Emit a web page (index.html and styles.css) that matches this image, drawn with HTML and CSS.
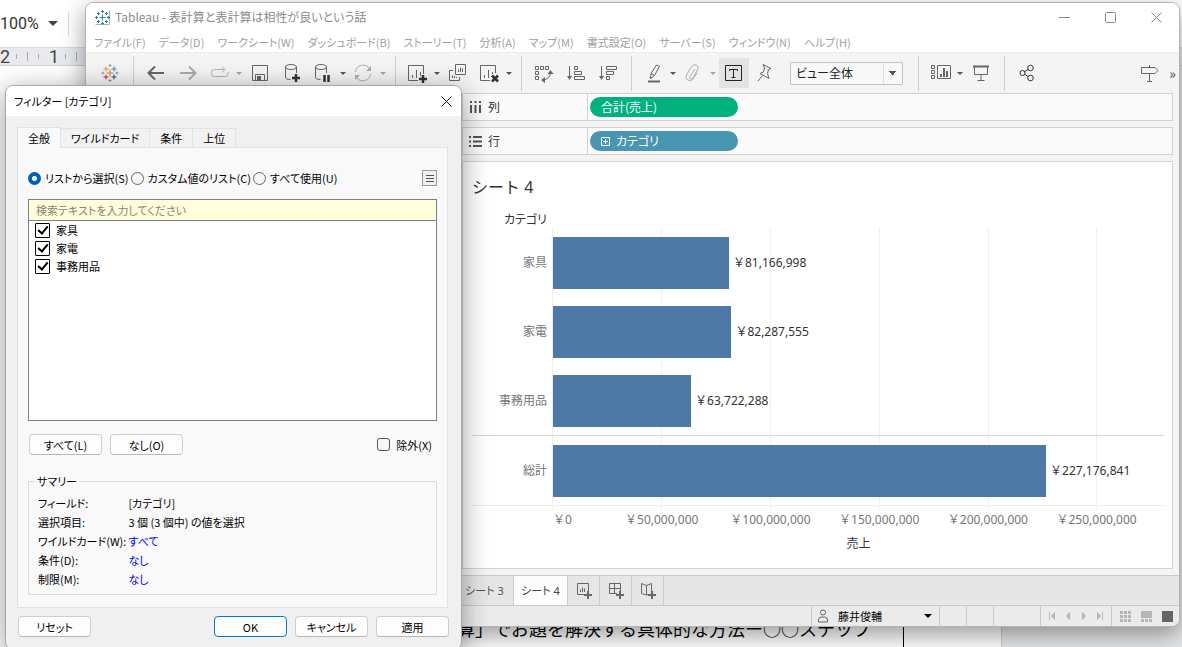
FILE: index.html
```html
<!DOCTYPE html>
<html lang="ja">
<head>
    <meta charset="utf-8">
    <title>Tableau - 表計算と表計算は相性が良いという話</title>
    <link rel="stylesheet" href="styles.css">
</head>
<body>
    <!-- Document behind the windows -->
    <div class="doc">
        <div class="doc-toolbar">
            <span class="doc-zoom">100%</span>
            <span class="doc-caret"></span>
            <span class="doc-line"></span>
        </div>
        <div class="doc-ruler">
            <span>2</span><i></i><i class="tall"></i><i></i><span>1</span><i></i><i class="tall"></i>
        </div>
        <div class="doc-page">
            <div class="doc-cell">算」でお題を解決する具体的な方法ー○○ステップ</div>
        </div>
    </div>

    <!-- Tableau window -->
    <div class="window">
        <header class="titlebar">
            <svg class="app-icon" width="15" height="15" viewBox="0 0 15 15">
                <path d="M0.5 14.5h14V.5" fill="none" stroke="#b0b0b0"/>
                <path d="M7.5 4.5v6M4.5 7.5h6M7.5 0v3M6 1.5h3M7.5 12v3M6 13.5h3M1.5 6v3M0 7.5h3M13.5 6v3M12 7.5h3M3.5 2v3M2 3.5h3M11.5 2v3M10 3.5h3M3.5 10v3M2 11.5h3M11.5 10v3M10 11.5h3" fill="none" stroke="#2f7fae"/>
            </svg>
            <span class="title">Tableau - 表計算と表計算は相性が良いという話</span>
            <div class="window-controls">
                <button aria-label="最小化"><svg width="11" height="11" viewBox="0 0 11 11"><path d="M0 5.5h11"/></svg></button>
                <button aria-label="最大化"><svg width="11" height="11" viewBox="0 0 11 11"><rect x=".5" y=".5" width="10" height="10" rx="1"/></svg></button>
                <button aria-label="閉じる"><svg width="11" height="11" viewBox="0 0 11 11"><path d="M.5.5l10 10M10.5.5l-10 10"/></svg></button>
            </div>
        </header>

        <nav class="menubar">
            <a href="#">ファイル(F)</a>
            <a href="#">データ(D)</a>
            <a href="#">ワークシート(W)</a>
            <a href="#">ダッシュボード(B)</a>
            <a href="#">ストーリー(T)</a>
            <a href="#">分析(A)</a>
            <a href="#">マップ(M)</a>
            <a href="#">書式設定(O)</a>
            <a href="#">サーバー(S)</a>
            <a href="#">ウィンドウ(N)</a>
            <a href="#">ヘルプ(H)</a>
        </nav>

        <div class="toolbar">
            <button class="tool" aria-label="スタートページ">
                <svg viewBox="0 0 20 20">
                    <path d="M10 6.5v7M6.500 10h7" stroke="#e8762c"/>
                    <path d="M6 3.500v5M3.500 6h5" stroke="#eb912c"/>
                    <path d="M14 3.500v5M11.500 6h5" stroke="#59879b"/>
                    <path d="M6 11.500v5M3.500 14h5" stroke="#c72035"/>
                    <path d="M14 11.500v5M11.500 14h5" stroke="#1f457e"/>
                    <path d="M10 1v3M8.500 2.500h3M3 8.500v3M1.500 10h3" stroke="#7ba6bd"/>
                    <path d="M10 16v3M8.500 17.500h3M17 8.500v3M15.500 10h3" stroke="#7199c4"/>
                </svg>
            </button>
            <span class="sep"></span>
            <button class="tool" aria-label="元に戻す"><svg viewBox="0 0 20 20"><path d="M18 10H3M9 3.500L2.500 10 9 16.500" stroke-width="2"/></svg></button>
            <button class="tool off" aria-label="やり直し"><svg viewBox="0 0 20 20"><path d="M2 10h15M11 3.500l6.500 6.500-6.500 6.500" stroke-width="2"/></svg></button>
            <div class="split">
                <button class="tool off" aria-label="再実行"><svg viewBox="0 0 20 20"><path d="M14 6.500H4.500q-3 0-3 3v1q0 3 3 3H15q3 0 3-3V9M12 3.500l3 3-3 3"/></svg></button>
                <button class="drop off" aria-label="再実行メニュー"></button>
            </div>
            <button class="tool" aria-label="保存"><svg viewBox="0 0 20 20"><path d="M2.500 2.500h15v15h-15zM5.500 17v-5.500h9V17"/><path class="solid" d="M7 13h4v4H7z"/></svg></button>
            <button class="tool" aria-label="データ ソースの追加"><svg viewBox="0 0 20 20"><ellipse cx="9" cy="4" rx="5.500" ry="2.500"/><path d="M3.500 4v10q0 2.500 5 2.500M14.500 4v6"/><path class="heavy" d="M14 11v8M10 15h8"/></svg></button>
            <div class="split">
                <button class="tool" aria-label="自動更新の一時停止"><svg viewBox="0 0 20 20"><ellipse cx="7" cy="4" rx="5.500" ry="2.500"/><path d="M1.500 4v10q0 2.500 5 2.500M12.500 4v6"/><path class="heavy" d="M10.500 12v7M14.500 12v7"/></svg></button>
                <button class="drop" aria-label="自動更新メニュー"></button>
            </div>
            <div class="split">
                <button class="tool off" aria-label="更新"><svg viewBox="0 0 20 20"><path d="M1.500 9a7.500 7.500 0 0 1 14-3M16.500 11a7.500 7.500 0 0 1-14 3"/><path class="solid" d="M17 3v5h-5zM1 17v-5h5z"/></svg></button>
                <button class="drop off" aria-label="更新メニュー"></button>
            </div>
            <span class="sep"></span>
            <div class="split">
                <button class="tool" aria-label="新しいワークシート"><svg viewBox="0 0 20 20"><path d="M10 17.500H.5v-15h15V11M4.500 12v3M8.500 7v8M12.500 9v4" /><path class="heavy" d="M15 12v8M11 16h8"/></svg></button>
                <button class="drop" aria-label="新しいワークシートメニュー"></button>
            </div>
            <button class="tool" aria-label="複製"><svg viewBox="0 0 20 20"><path d="M7.500 1.500h10v10h-10zM10.500 9V6.500M12.500 9V4.500M14.500 9V5.500M5 7.500H1.500v10h10V14M4.500 15v-2.500M6.500 15v-2M8.500 15v-1"/></svg></button>
            <div class="split">
                <button class="tool" aria-label="シートのクリア"><svg viewBox="0 0 20 20"><path d="M10 17.500H.5v-15h15V10M4.500 12v3M8.500 7v8M12.500 9v2"/><path class="heavy" d="M12 12.500l6 6M18 12.500l-6 6"/></svg></button>
                <button class="drop" aria-label="クリアメニュー"></button>
            </div>
            <span class="sep"></span>
            <button class="tool" aria-label="行と列の交換"><svg viewBox="0 0 20 20"><path d="M1.500 3.500h3v3h-3zM6.500 3.500h3v3h-3zM11.500 3.500h3v3h-3zM1.500 8.500h3v3h-3zM1.500 13.500h3v3h-3zM9 17q7-1 7.500-7"/><path class="solid" d="M13.500 11l3-4 3 4zM11 14l-4 3 4 3z"/></svg></button>
            <button class="tool" aria-label="昇順で並べ替え"><svg viewBox="0 0 20 20"><path d="M3.500 3v13M8.500 3.500h3v3h-3zM8.500 8.500h7v3h-7zM8.500 13.500h10v3h-10z"/><path class="solid" d="M1 13h5l-2.500 4z"/></svg></button>
            <button class="tool" aria-label="降順で並べ替え"><svg viewBox="0 0 20 20"><path d="M3.500 3v13M8.500 3.500h10v3h-10zM8.500 8.500h7v3h-7zM8.500 13.500h3v3h-3z"/><path class="solid" d="M1 13h5l-2.500 4z"/></svg></button>
            <span class="sep"></span>
            <div class="split">
                <button class="tool" aria-label="ハイライト"><svg viewBox="0 0 20 20"><path d="M12.500 2l3 1.500-5 9-4 3 .5-5zM7 10.500l3.500 2M6.500 15.500l-1-1"/><path d="M4 18.500h12" stroke-width="2"/></svg></button>
                <button class="drop" aria-label="ハイライトメニュー"></button>
            </div>
            <div class="split">
                <button class="tool off" aria-label="メンバーのグループ化"><svg viewBox="0 0 20 20"><path d="M11 6l-5 7.500q-1 2 .5 2.500t2.500-1L13.500 7q2-3.500-1-5t-5 2L3 11q-2.500 4 .5 6t6-1.500L13 10"/></svg></button>
                <button class="drop off" aria-label="グループメニュー"></button>
            </div>
            <button class="tool active" aria-label="マーク ラベルを表示"><svg viewBox="0 0 20 20"><path d="M1.500 2.500h16v15h-16zM5.500 8V6.500h8V8M9.500 6.500v7.500M7.500 14.500h4"/></svg></button>
            <button class="tool" aria-label="固定"><svg viewBox="0 0 20 20"><path d="M7 1.500l8 4-2.500 1-1 4 1.500 5-9-5 3.500-1.500L8.500 5zM6.500 12.500L2 18"/></svg></button>
            <select class="fit-select" aria-label="表示サイズ">
                <option>ビュー全体</option>
            </select>
            <span class="sep"></span>
            <div class="split">
                <button class="tool" aria-label="表示形式"><svg viewBox="0 0 20 20"><path d="M.5 2.500h3v3h-3zM.5 7.500h3v3h-3zM.5 12.500h3v3h-3zM6.500 2.500h13v13h-13z"/><path d="M10 14v-3M13 14V5M16 14V8" stroke-width="2"/></svg></button>
                <button class="drop" aria-label="表示形式メニュー"></button>
            </div>
            <button class="tool" aria-label="プレゼンテーション モード"><svg viewBox="0 0 20 20"><path d="M3.500 4v7.500h13V4M10 12v5M6.500 17.500h7"/><path d="M2 3.500h16" stroke-width="2"/></svg></button>
            <span class="sep"></span>
            <button class="tool dark" aria-label="共有"><svg viewBox="0 0 20 20"><circle cx="5.500" cy="10" r="2.500"/><circle cx="13.500" cy="5" r="2.800"/><circle cx="13.500" cy="15" r="2.800"/><path d="M7.500 8.800l3.500-2.300M7.500 11.200l3.500 2.300"/></svg></button>
            <button class="tool guide" aria-label="ガイド"><svg viewBox="0 0 20 20"><path d="M2.500 4.500H16l3 3-3 3H2.500zM10.500 4V2M10.500 11v7M8 18.500h5"/></svg></button>
            <button class="more" aria-label="その他">»</button>
        </div>

        <div class="workspace">
            <div class="side-pane"></div>
            <main class="main">
                <div class="shelf">
                    <div class="shelf-name">
                        <svg width="13" height="13" viewBox="0 0 13 13"><path d="M2 4v8M6.500 4v8M11 4v8M2 0v2M6.500 0v2M11 0v2" stroke="#555" stroke-width="2"/></svg>
                        列
                    </div>
                    <div class="pill green">合計(売上)</div>
                </div>
                <div class="shelf">
                    <div class="shelf-name">
                        <svg width="13" height="13" viewBox="0 0 13 13"><path d="M4 2h9M4 6.500h9M4 11h9M0 2h2M0 6.500h2M0 11h2" stroke="#555" stroke-width="2"/></svg>
                        行
                    </div>
                    <div class="pill blue">
                        <svg width="9" height="9" viewBox="0 0 9 9"><path d="M.5.5h8v8h-8zM4.500 2v5M2 4.500h5" fill="none" stroke="#fff"/></svg>
                        カテゴリ
                    </div>
                </div>

                <section class="view">
                    <h1>シート 4</h1>
                    <div class="field-name">カテゴリ</div>
                    <div class="chart">
                        <div class="gridlines"><i></i><i></i><i></i><i></i><i></i><i></i></div>
                        <div class="bar-row">
                            <span class="bar-name">家具</span>
                            <div class="bar-track"><div class="bar" style="width: 28.8%"></div><span>￥81,166,998</span></div>
                        </div>
                        <div class="bar-row">
                            <span class="bar-name">家電</span>
                            <div class="bar-track"><div class="bar" style="width: 29.2%"></div><span>￥82,287,555</span></div>
                        </div>
                        <div class="bar-row">
                            <span class="bar-name">事務用品</span>
                            <div class="bar-track"><div class="bar" style="width: 22.6%"></div><span>￥63,722,288</span></div>
                        </div>
                        <div class="bar-row total">
                            <span class="bar-name">総計</span>
                            <div class="bar-track"><div class="bar" style="width: 80.7%"></div><span>￥227,176,841</span></div>
                        </div>
                    </div>
                    <div class="axis">
                        <span>￥0</span>
                        <span>￥50,000,000</span>
                        <span>￥100,000,000</span>
                        <span>￥150,000,000</span>
                        <span>￥200,000,000</span>
                        <span>￥250,000,000</span>
                    </div>
                    <div class="axis-title">売上</div>
                </section>
            </main>
        </div>

        <div class="sheet-tabs">
            <button class="sheet-tab">シート 3</button>
            <button class="sheet-tab current">シート 4</button>
            <button class="new-tab" aria-label="新しいワークシート"><svg width="16" height="16" viewBox="0 0 16 16"><path d="M9 11.500H1.500V.5h11V8M4.500 9V6.500M6.500 9V4.500M8.500 9V5.500"/><path class="plus" d="M12 8v8M8 12h8"/></svg></button>
            <button class="new-tab" aria-label="新しいダッシュボード"><svg width="16" height="16" viewBox="0 0 16 16"><path d="M9 10.500H1.500V.5h11V8M6.500.5v10M1.500 5.500h11"/><path class="plus" d="M12 8v8M8 12h8"/></svg></button>
            <button class="new-tab" aria-label="新しいストーリー"><svg width="16" height="16" viewBox="0 0 16 16"><path d="M6.500 12L1.500 10.500V.5l5 2 5-2V8M6.500 2.500V12l2-.5"/><path class="plus" d="M12 8v8M8 12h8"/></svg></button>
        </div>

        <footer class="status">
            <button class="user">
                <svg width="12" height="14" viewBox="0 0 12 14"><circle cx="6" cy="3.500" r="2.500" fill="none" stroke="#666"/><path d="M1.500 13v-2q0-3 3-3h3q3 0 3 3v2z" fill="none" stroke="#666"/></svg>
                <span>藤井俊輔</span>
                <i></i>
            </button>
            <span class="cell"></span>
            <span class="cell"></span>
            <span class="cell wide"></span>
            <div class="pager">
                <button aria-label="最初"><svg width="8" height="8" viewBox="0 0 8 8"><path d="M1 0h1v8H1zM7 0v8L3 4z"/></svg></button>
                <button aria-label="前へ"><svg width="8" height="8" viewBox="0 0 8 8"><path d="M6 0v8L2 4z"/></svg></button>
                <button aria-label="次へ"><svg width="8" height="8" viewBox="0 0 8 8"><path d="M2 0v8l4-4z"/></svg></button>
                <button aria-label="最後"><svg width="8" height="8" viewBox="0 0 8 8"><path d="M6 0h1v8H6zM1 0v8l4-4z"/></svg></button>
            </div>
            <div class="modes">
                <button aria-label="タイル"><svg width="11" height="11" viewBox="0 0 11 11"><path d="M0 0h3v3H0zM4 0h3v3H4zM8 0h3v3H8zM0 4h3v3H0zM4 4h3v3H4zM8 4h3v3H8zM0 8h3v3H0zM4 8h3v3H4zM8 8h3v3H8z"/></svg></button>
                <button aria-label="フィルムストリップ"><svg width="11" height="11" viewBox="0 0 11 11"><path d="M0 0h11v7H0zM0 8h3v3H0zM4 8h3v3H4zM8 8h3v3H8z"/></svg></button>
                <button class="on" aria-label="シート"><svg width="11" height="11" viewBox="0 0 11 11"><path d="M0 0h11v11H0z"/></svg></button>
            </div>
        </footer>
    </div>

    <!-- Filter dialog -->
    <div class="dialog" role="dialog" aria-labelledby="dialogTitle">
        <div class="dialog-title">
            <span id="dialogTitle">フィルター [カテゴリ]</span>
            <button aria-label="閉じる"><svg width="11" height="11" viewBox="0 0 11 11"><path d="M.5.5l10 10M10.5.5l-10 10" fill="none" stroke="#111"/></svg></button>
        </div>
        <div class="dialog-body">
            <div class="tabs">
                <button class="tab selected">全般</button>
                <button class="tab">ワイルドカード</button>
                <button class="tab">条件</button>
                <button class="tab">上位</button>
            </div>
            <div class="panel">
                <div class="radio-row">
                    <label><input type="radio" name="mode" checked>リストから選択(S)</label>
                    <label><input type="radio" name="mode">カスタム値のリスト(C)</label>
                    <label><input type="radio" name="mode">すべて使用(U)</label>
                    <button class="list-menu" aria-label="リストメニュー"><svg width="8" height="9" viewBox="0 0 8 9"><path d="M0 1.500h8M0 4.500h8M0 7.500h8" stroke="#4a5568"/></svg></button>
                </div>
                <div class="list">
                    <input type="text" class="search" aria-label="検索" placeholder="検索テキストを入力してください">
                    <label><input type="checkbox" checked>家具</label>
                    <label><input type="checkbox" checked>家電</label>
                    <label><input type="checkbox" checked>事務用品</label>
                </div>
                <div class="select-row">
                    <button class="btn">すべて(L)</button>
                    <button class="btn">なし(O)</button>
                    <label class="exclude"><input type="checkbox">除外(X)</label>
                </div>
                <fieldset class="summary">
                    <legend>サマリー</legend>
                    <dl>
                        <dt>フィールド:</dt><dd>[カテゴリ]</dd>
                        <dt>選択項目:</dt><dd>3 個 (3 個中) の値を選択</dd>
                        <dt>ワイルドカード(W):</dt><dd><a href="#">すべて</a></dd>
                        <dt>条件(D):</dt><dd><a href="#">なし</a></dd>
                        <dt>制限(M):</dt><dd><a href="#">なし</a></dd>
                    </dl>
                </fieldset>
            </div>
            <div class="dialog-buttons">
                <button class="btn reset">リセット</button>
                <button class="btn primary">OK</button>
                <button class="btn">キャンセル</button>
                <button class="btn">適用</button>
            </div>
        </div>
    </div>
</body>
</html>
```
FILE: styles.css
```css
* {
    box-sizing: border-box;
}
body {
    margin: 0;
    height: 100vh;
    overflow: hidden;
    position: relative;
    font-family: "Noto Sans CJK JP", sans-serif;
    font-size: 11px;
    line-height: 16px;
    font-feature-settings: "palt";
    color: #000;
}
button, input, select {
    font: inherit;
    font-feature-settings: inherit;
    color: inherit;
    margin: 0;
}
button {
    padding: 0;
    border: none;
    background: none;
}
a {
    color: inherit;
    text-decoration: none;
}
svg {
    display: block;
    flex: none;
}

/* document behind */
.doc {
    height: 100%;
    display: flex;
    flex-direction: column;
    background: #e6e8ea;
}
.doc-toolbar {
    height: 47px;
    display: flex;
    align-items: center;
    background: #fff;
    font-family: Roboto, sans-serif;
    font-size: 16px;
    color: #333;
}
.doc-zoom {
    width: 38px;
}
.doc-caret {
    margin-left: 10px;
    border: 5px solid transparent;
    border-top-color: #444;
    border-bottom: none;
}
.doc-line {
    width: 1px;
    height: 24px;
    margin-left: 10px;
    background: #dadce0;
}
.doc-ruler {
    height: 19px;
    display: flex;
    align-items: center;
    gap: 10px;
    background: #e8eaf0;
    border-top: 1px solid #d8dade;
    border-bottom: 1px solid #d0d2d6;
    font-family: Roboto, sans-serif;
    font-size: 18px;
    color: #444;
}
.doc-ruler span {
    width: 10px;
    margin-right: -4px;
}
.doc-ruler i {
    width: 1px;
    height: 5px;
    background: #aaa;
}
.doc-ruler .tall {
    height: 9px;
}
.doc-page {
    flex: 1;
    display: flex;
    margin-right: 180px;
    background: #fff;
    border-right: 1px solid #ccc;
}
.doc-cell {
    width: 904px;
    display: flex;
    align-items: flex-end;
    padding: 0 0 5px 457px;
    border-right: 1px solid #000;
    font-size: 18px;
    line-height: 28px;
    white-space: nowrap;
    font-feature-settings: normal;
}

/* main window */
.window {
    position: absolute;
    top: 2px;
    left: 85px;
    right: 2px;
    bottom: 20px;
    display: flex;
    flex-direction: column;
    overflow: hidden;
    background: #f4f4f4;
    border: 1px solid #b4b4b4;
    border-radius: 8px;
    box-shadow: 0 8px 24px rgba(0, 0, 0, 0.4);
}
.titlebar {
    height: 28px;
    display: flex;
    align-items: center;
    gap: 5px;
    padding-left: 9px;
    background: #fff;
    color: #8c8c8c;
    font-size: 12px;
}
.title {
    flex: 1;
}
.window-controls {
    display: flex;
}
.window-controls button {
    width: 46px;
    height: 28px;
    display: grid;
    place-items: center;
}
.window-controls svg {
    fill: none;
    stroke: #888;
}
.menubar {
    height: 21px;
    display: flex;
    align-items: center;
    gap: 13px;
    padding-left: 8px;
    background: #fff;
    color: #a0a0a0;
    white-space: nowrap;
}
.toolbar {
    height: 41px;
    display: flex;
    align-items: center;
    gap: 2px;
    padding-left: 9px;
    border-top: 1px solid #ececec;
}
.tool {
    width: 30px;
    height: 30px;
    display: grid;
    place-items: center;
}
.tool svg {
    width: 20px;
    height: 20px;
    fill: none;
    stroke: #666;
}
.tool .solid {
    fill: #666;
    stroke: none;
}
.tool .heavy {
    stroke: #333;
    stroke-width: 2.500;
}
.tool.off {
    opacity: 0.5;
}
.tool.dark svg {
    stroke: #333;
}
.tool.active {
    background: #e3e3e3;
}
.tool.active svg {
    stroke: #222;
}
.split {
    display: flex;
    align-items: center;
}
.drop {
    width: 8px;
    height: 30px;
    display: grid;
    place-items: center;
}
.drop::before {
    content: "";
    border: 3px solid transparent;
    border-top-color: #555;
    border-bottom: none;
}
.drop.off {
    opacity: 0.5;
}
.sep {
    width: 1px;
    height: 35px;
    margin: 0 5px 0 6px;
    background: #cfcfcf;
}
.fit-select {
    width: 113px;
    height: 23px;
    margin: 0 7px;
    padding: 0 5px;
    appearance: none;
    border: 1px solid #c3c3c3;
    border-radius: 1px;
    color: #222;
    font-size: 12px;
    background:
        linear-gradient(135deg, #555 50%, transparent 50%) right 5px center / 4px 4px no-repeat,
        linear-gradient(225deg, #555 50%, transparent 50%) right 9px center / 4px 4px no-repeat,
        linear-gradient(#dedede, #dedede) right 18px center / 1px 100% no-repeat,
        #f8f8f8;
}
.guide {
    margin-left: auto;
}
.more {
    width: 13px;
    font-size: 14px;
    color: #444;
}

/* shelves and view */
.workspace {
    flex: 1;
    display: flex;
}
.side-pane {
    width: 376px;
}
.main {
    flex: 1;
    display: flex;
    flex-direction: column;
    gap: 6px;
    padding: 0 6px 6px 0;
}
.shelf {
    height: 28px;
    display: flex;
    align-items: center;
    background: #fafafa;
    border: 1px solid #d2d2d2;
    font-size: 12px;
}
.shelf-name {
    width: 125px;
    height: 100%;
    display: flex;
    align-items: center;
    gap: 6px;
    padding-left: 6px;
    border-right: 1px solid #d2d2d2;
    color: #333;
}
.pill {
    width: 148px;
    height: 20px;
    display: flex;
    align-items: center;
    gap: 6px;
    margin-left: 2px;
    padding: 0 11px;
    border-radius: 10px;
    color: #fff;
}
.green {
    background: #00b180;
}
.blue {
    background: #4996b2;
}
.view {
    flex: 1;
    display: flex;
    flex-direction: column;
    padding: 11px 8px 16px 9px;
    background: #fff;
    border: 1px solid #d2d2d2;
    color: #333;
    font-family: "Noto Sans", "Noto Sans CJK JP", sans-serif;
    font-size: 12px;
}
.view h1 {
    margin: 0 0 11px;
    font-size: 16px;
    font-weight: 400;
    font-feature-settings: normal;
    line-height: 28px;
}
.field-name {
    width: 75px;
    text-align: right;
}
.chart {
    flex: 1;
    display: flex;
    flex-direction: column;
    position: relative;
    border-bottom: 1px solid #ececec;
}
.chart, .axis {
    font-feature-settings: normal;
}
.gridlines {
    position: absolute;
    top: 0;
    bottom: -5px;
    left: 80px;
    right: 0;
    display: grid;
    grid-template-columns: repeat(5, 50fr) 31fr;
}
.gridlines i {
    border-left: 1px solid #efefef;
}
.bar-row {
    flex: 1;
    display: flex;
    align-items: center;
    position: relative;
}
.bar-name {
    width: 81px;
    padding-right: 6px;
    text-align: right;
    color: #757575;
}
.bar-track {
    flex: 1;
    display: flex;
    align-items: center;
    gap: 4px;
}
.bar {
    height: 52px;
    background: #4e79a7;
}
.total {
    border-top: 1px solid #d4d4d4;
}
.axis {
    display: grid;
    grid-template-columns: 25fr repeat(5, 50fr) 6fr;
    padding: 6px 0 0 81px;
    text-align: center;
    color: #757575;
    white-space: nowrap;
}
.axis span:first-child {
    text-align: left;
}
.axis-title {
    padding: 8px 0 0 81px;
    text-align: center;
}

/* sheet tabs */
.sheet-tabs {
    height: 31px;
    display: flex;
    padding-left: 370px;
    background: #e6e6e6;
    border-top: 1px solid #cacaca;
    border-bottom: 1px solid #cacaca;
    color: #555;
    font-family: "Noto Sans", "Noto Sans CJK JP", sans-serif;
}
.sheet-tabs button {
    border-right: 1px solid #cacaca;
}
.sheet-tab {
    width: 58px;
}
.sheet-tab.current {
    width: 54px;
    background: #fcfcfc;
    color: #444;
}
.new-tab {
    width: 32px;
    display: grid;
    place-items: center;
}
.new-tab svg {
    fill: none;
    stroke: #666;
}
.new-tab .plus {
    stroke-width: 2;
}

/* status bar */
.status {
    height: 20px;
    display: flex;
    justify-content: flex-end;
    background: #ebebeb;
}
.user {
    width: 128px;
    display: flex;
    align-items: center;
    gap: 9px;
    padding: 0 7px 0 5px;
    border-left: 1px solid #cacaca;
}
.user i {
    margin-left: auto;
    border: 4px solid transparent;
    border-top-color: #000;
    border-bottom: none;
}
.cell {
    width: 27px;
    border-left: 1px solid #cacaca;
}
.cell.wide {
    width: 47px;
}
.pager {
    display: flex;
    gap: 8px;
    padding: 0 7px;
    border-left: 1px solid #cacaca;
}
.modes {
    display: flex;
    gap: 10px;
    padding: 0 6px 0 8px;
    border-left: 1px solid #cacaca;
}
.pager svg, .modes svg {
    fill: #b5b5b5;
}
.modes .on svg {
    fill: #666;
}

/* filter dialog */
.dialog {
    position: absolute;
    top: 85px;
    left: 5px;
    width: 457px;
    overflow: hidden;
    background: #f0f0f0;
    border: 1px solid #a8a8a8;
    border-radius: 8px;
    box-shadow: 0 6px 28px rgba(0, 0, 0, 0.4);
}
.dialog-title {
    height: 30px;
    display: flex;
    align-items: center;
    justify-content: space-between;
    padding: 0 9px 0 8px;
    background: #fff;
}
.dialog-body {
    padding: 11px 12px 12px 11px;
}
.tabs {
    display: flex;
    align-items: flex-end;
}
.tab {
    height: 19px;
    padding: 0 10px;
    background: #f2f2f2;
    border: 1px solid #e2e2e2;
    border-left: none;
    border-bottom: none;
}
.tab.selected {
    height: 21px;
    margin-bottom: -1px;
    position: relative;
    background: #f9f9f9;
    border-left: 1px solid #e2e2e2;
}
.panel {
    padding: 21px 10px 12px;
    background: #f9f9f9;
    border: 1px solid #e2e2e2;
    margin-right: 1px;
}
.radio-row {
    height: 18px;
    display: flex;
    align-items: center;
    gap: 2px;
    margin-bottom: 12px;
}
.radio-row label, .list label, .exclude {
    display: flex;
    align-items: center;
    gap: 6px;
}
.radio-row label {
    gap: 4px;
}
.radio-row input {
    width: 13px;
    height: 13px;
    appearance: none;
    border: 1px solid #666;
    border-radius: 50%;
    background: #f6f6f6;
}
.radio-row input:checked {
    border: 4px solid #005fb8;
    background: #fff;
}
.list-menu {
    width: 15px;
    height: 16px;
    display: grid;
    place-items: center;
    margin-left: auto;
    border: 1px solid #999;
    background: #f0f0f0;
}
.list {
    height: 222px;
    background: #fff;
    border: 1px solid #7a818c;
}
.list label {
    height: 18px;
    padding-left: 6px;
}
.search {
    display: block;
    width: 100%;
    height: 21px;
    padding: 0 7px;
    border: none;
    border-bottom: 1px solid #7a818c;
    background: #ffffdc;
}
.search::placeholder {
    color: #858575;
}
.list [type="checkbox"] {
    width: 15px;
    height: 15px;
    appearance: none;
    display: grid;
    place-items: center;
    border: 1px solid #000;
    border-radius: 1px;
}
.list [type="checkbox"]::before {
    content: "";
    width: 4px;
    height: 8px;
    margin-bottom: 2px;
    border: solid #000;
    border-width: 0 2px 2px 0;
    rotate: 40deg;
}
.select-row {
    display: flex;
    align-items: center;
    gap: 8px;
    padding: 13px 5px 0 1px;
}
.btn {
    width: 73px;
    height: 21px;
    background: #fdfdfd;
    border: 1px solid #cfcfcf;
    border-bottom-color: #b8b8b8;
    border-radius: 4px;
}
.exclude {
    margin-left: auto;
}
.exclude input {
    width: 13px;
    height: 13px;
    appearance: none;
    border: 1px solid #555;
    border-radius: 3px;
    background: #f6f6f6;
}
.summary {
    margin: 18px 0 0;
    padding: 5px 9px;
    border: 1px solid #dcdcdc;
}
.summary legend {
    margin-left: -3px;
    padding: 0 2px;
}
.summary dl {
    display: grid;
    grid-template-columns: auto 1fr;
    column-gap: 2px;
    margin: 0;
    line-height: 19px;
    white-space: nowrap;
}
.summary dd {
    margin: 0;
}
.summary a {
    color: #0000ff;
}
.dialog-buttons {
    display: flex;
    gap: 8px;
    padding-top: 8px;
    padding-left: 1px;
}
.reset {
    margin-right: auto;
}
.btn.primary {
    border-color: #0078d4;
}
```
